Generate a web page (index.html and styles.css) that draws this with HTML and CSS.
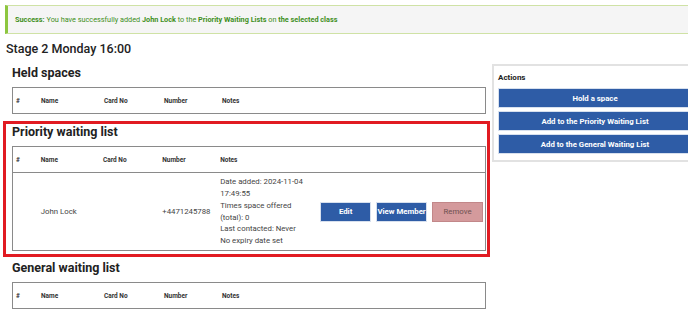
FILE: index.html
```html
<!DOCTYPE html>
<html lang="en">
<head>
  <meta charset="UTF-8" />
  <meta name="viewport" content="width=device-width, initial-scale=1.0" />
  <title>Class lists</title>
  <link rel="stylesheet" href="styles.css">
</head>
<body>
  <div class="alert">
    <strong>Success:</strong> You have successfully added <strong>John Lock</strong> to the <strong>Priority Waiting Lists</strong> on <strong>the selected class</strong>
  </div>

  <h1>Stage 2 Monday 16:00</h1>

  <div class="layout">
    <div class="lists">
      <section class="list">
        <h2>Held spaces</h2>
        <table>
          <thead>
            <tr><th class="c-num">#</th><th class="c-name">Name</th><th class="c-card">Card No</th><th class="c-phone">Number</th><th>Notes</th></tr>
          </thead>
        </table>
      </section>

      <section class="list highlight">
        <h2>Priority waiting list</h2>
        <table>
          <thead>
            <tr><th class="c-num">#</th><th class="c-name">Name</th><th class="c-card">Card No</th><th class="c-phone">Number</th><th class="c-notes">Notes</th><th></th></tr>
          </thead>
          <tbody>
            <tr>
              <td></td>
              <td>John Lock</td>
              <td></td>
              <td>+4471245788</td>
              <td class="notes">Date added: 2024-11-04 17:49:55<br>Times space offered (total): 0<br>Last contacted: Never<br>No expiry date set</td>
              <td class="row-actions">
                <button class="btn btn-blue">Edit</button>
                <button class="btn btn-blue">View Member</button>
                <button class="btn btn-remove">Remove</button>
              </td>
            </tr>
          </tbody>
        </table>
      </section>

      <section class="list">
        <h2>General waiting list</h2>
        <table>
          <thead>
            <tr><th class="c-num">#</th><th class="c-name">Name</th><th class="c-card">Card No</th><th class="c-phone">Number</th><th>Notes</th></tr>
          </thead>
        </table>
      </section>
    </div>

    <aside class="actions">
      <h3>Actions</h3>
      <button class="btn btn-blue wide">Hold a space</button>
      <button class="btn btn-blue wide">Add to the Priority Waiting List</button>
      <button class="btn btn-blue wide">Add to the General Waiting List</button>
    </aside>
  </div>
</body>
</html>
```

FILE: styles.css
```css
body { font-family: Roboto, "Liberation Sans", sans-serif; color: #222; background: #fff; margin: 0; width: 700px; overflow: hidden; }

.alert { margin: 5px 0 0 5px; height: 27px; line-height: 27px; padding-left: 7px; background: #f5f5f5; border: 1px solid #cfe2a5; border-left: 3px solid #8dc63f; color: #3f8f22; font-size: 7.3px; white-space: nowrap; }
.alert strong { font-weight: 700; }

h1 { font-size: 12.5px; font-weight: 500; margin: 7px 0 0 6px; line-height: 16px; }

.layout { display: flex; align-items: flex-start; }
.lists { width: 490px; flex: none; padding-top: 5px; }

.list { margin-left: 3px; width: 474px; padding: 0 1px 3px 6px; border: 3px solid transparent; }
.list h2 { font-size: 12.5px; font-weight: 700; margin: 0 0 6px; line-height: 16px; }
.list:first-child { padding-bottom: 4px; }
.highlight { border-color: #e11b22; }

table { width: 100%; border-collapse: collapse; border: 1px solid #8a8a8a; font-size: 7.8px; }
th { font-size: 6.5px; font-weight: 700; text-align: left; height: 25px; padding: 0 3px; color: #333; }
td { padding: 0 3px; color: #444; vertical-align: middle; height: 77px; }
thead tr { border-bottom: 1px solid #8a8a8a; }
.c-num { width: 19px; }
.c-name { width: 57px; }
.c-card { width: 54px; }
.c-phone { width: 52px; }
.c-notes { width: 95px; }
.notes { line-height: 11.7px; }
.row-actions { white-space: nowrap; padding: 0 2px 0 0; text-align: right; }

.btn { font-family: inherit; font-size: 7.8px; height: 20px; border: 1px solid #d7e0ee; cursor: pointer; padding: 0; }
.btn-blue { background: #2e5ca6; color: #fff; font-weight: 700; }
.row-actions .btn { width: 51px; margin-left: 3px; }
.btn-remove { background: #d49a9c; color: #6e5050; border-color: #c28789; }

.actions { margin: 7px 0 0 2px; width: 194px; flex: none; border: 2px solid #e2e2e2; padding: 3px 4px 6px; display: flex; flex-direction: column; gap: 3px; }
.actions h3 { font-size: 8px; font-weight: 700; margin: 4px 0 3px; }
.wide { width: 100%; }
```
